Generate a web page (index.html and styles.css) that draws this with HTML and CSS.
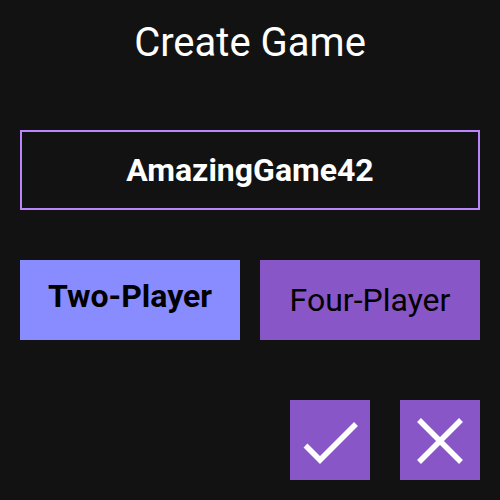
FILE: index.html
```html
<!DOCTYPE html>
<html>
<head>
<meta charset="utf-8">
<link rel="stylesheet" href="styles.css">
</head>
<body>
<div class="page">
  <h1 class="title">Create Game</h1>
  <div class="name-field">AmazingGame42</div>
  <div class="modes">
    <div class="mode mode-two">Two-Player</div>
    <div class="mode mode-four">Four-Player</div>
  </div>
  <div class="actions">
    <div class="icon-btn">
      <svg width="80" height="80" viewBox="0 0 80 80"><polyline points="15.5,45.5 30,60 66,24" fill="none" stroke="#fff" stroke-width="5.5"/></svg>
    </div>
    <div class="icon-btn">
      <svg width="80" height="80" viewBox="0 0 80 80"><path d="M19 20 L61 62 M61 20 L19 62" fill="none" stroke="#fff" stroke-width="5.5"/></svg>
    </div>
  </div>
</div>
</body>
</html>
```
FILE: styles.css
```css
html, body {
  margin: 0;
  padding: 0;
  background: #121212;
  width: 500px;
  height: 500px;
  overflow: hidden;
  font-family: Roboto, "Liberation Sans", sans-serif;
}
.page {
  padding: 0 20px;
}
.title {
  margin: 0;
  padding-top: 19px;
  height: 130px;
  box-sizing: border-box;
  text-align: center;
  font-weight: 400;
  font-size: 40px;
  line-height: 48px;
  color: #ffffff;
}
.name-field {
  height: 80px;
  box-sizing: border-box;
  border: 2px solid #bb86fc;
  display: flex;
  align-items: center;
  justify-content: center;
  color: #ffffff;
  font-weight: 700;
  font-size: 32px;
}
.modes {
  margin-top: 50px;
  display: flex;
  gap: 20px;
}
.mode {
  flex: 1;
  height: 80px;
  display: flex;
  align-items: center;
  justify-content: center;
  color: #000000;
  font-size: 32px;
}
.mode-two {
  background: #888cff;
  font-weight: 700;
  padding-bottom: 8px;
  box-sizing: border-box;
}
.mode-four {
  background: #8856c6;
  font-weight: 400;
}
.actions {
  margin-top: 60px;
  display: flex;
  justify-content: flex-end;
  gap: 30px;
}
.icon-btn {
  width: 80px;
  height: 80px;
  background: #8856c6;
}
.icon-btn svg {
  display: block;
}
```
